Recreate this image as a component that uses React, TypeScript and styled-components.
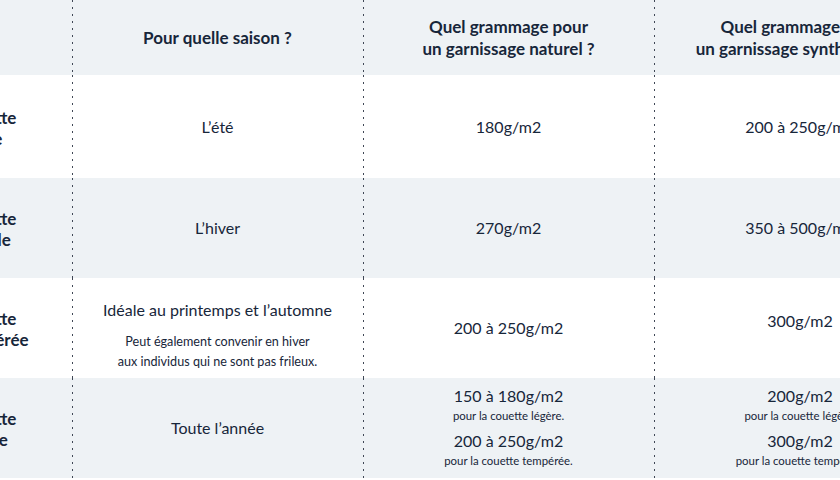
import React from 'react';
import styled, {createGlobalStyle} from 'styled-components';

type Amount = {value: string; note?: string};

type RowData = {
    label: string[];
    season: string;
    seasonNotes?: string[];
    natural: Amount[];
    synthetic: Amount[];
    height: number;
    shaded: boolean;
    liftSynthetic?: boolean;
};

const rows: RowData[] = [
    {
        label: ['Couette', 'légère'],
        season: 'L’été',
        natural: [{value: '180g/m2'}],
        synthetic: [{value: '200 à 250g/m2'}],
        height: 103,
        shaded: false,
    },
    {
        label: ['Couette', 'chaude'],
        season: 'L’hiver',
        natural: [{value: '270g/m2'}],
        synthetic: [{value: '350 à 500g/m2'}],
        height: 100,
        shaded: true,
    },
    {
        label: ['Couette', 'tempérée'],
        season: 'Idéale au printemps et l’automne',
        seasonNotes: ['Peut également convenir en hiver', 'aux individus qui ne sont pas frileux.'],
        natural: [{value: '200 à 250g/m2'}],
        synthetic: [{value: '300g/m2'}],
        height: 100,
        shaded: false,
        liftSynthetic: true,
    },
    {
        label: ['Couette', 'double'],
        season: 'Toute l’année',
        natural: [
            {value: '150 à 180g/m2', note: 'pour la couette légère.'},
            {value: '200 à 250g/m2', note: 'pour la couette tempérée.'},
        ],
        synthetic: [
            {value: '200g/m2', note: 'pour la couette légère.'},
            {value: '300g/m2', note: 'pour la couette tempérée.'},
        ],
        height: 100,
        shaded: true,
    },
];

export default function App() {
    return (
        <>
            <GlobalStyle/>
            <Page>
                <Table>
                    <Row $shaded $height={75}>
                        <LabelCell/>
                        <HeadCell>Pour quelle saison ?</HeadCell>
                        <HeadCell>Quel grammage pour<br/>un garnissage naturel ?</HeadCell>
                        <HeadCell>Quel grammage pour<br/>un garnissage synthétique ?</HeadCell>
                    </Row>

                    {rows.map(row =>
                        <Row key={row.season} $shaded={row.shaded} $height={row.height}>
                            <LabelCell>
                                <Label>{row.label[0]}<br/>{row.label[1]}</Label>
                            </LabelCell>
                            <Cell $padTop={row.seasonNotes ? 14 : 0}>
                                <Season $withNotes={!!row.seasonNotes}>{row.season}</Season>
                                {row.seasonNotes && row.seasonNotes.map(n =>
                                    <SeasonNote key={n}>{n}</SeasonNote>
                                )}
                            </Cell>
                            <Cell>
                                {row.natural.map(a =>
                                    <AmountGroup key={a.value}>
                                        <Value>{a.value}</Value>
                                        {a.note && <AmountNote>{a.note}</AmountNote>}
                                    </AmountGroup>
                                )}
                            </Cell>
                            <Cell $padBottom={row.liftSynthetic ? 14 : 0}>
                                {row.synthetic.map(a =>
                                    <AmountGroup key={a.value}>
                                        <Value>{a.value}</Value>
                                        {a.note && <AmountNote>{a.note}</AmountNote>}
                                    </AmountGroup>
                                )}
                            </Cell>
                        </Row>
                    )}
                </Table>
            </Page>
        </>
    );
}

const GlobalStyle = createGlobalStyle`
    html, body {
        margin: 0;
        padding: 0;
        background: #ffffff;
        overflow: hidden;
    }

    body {
        font-family: Lato, "Open Sans", sans-serif;
        color: #17263a;
    }
`

const Page = styled.div`
    width: 840px;
    height: 480px;
    overflow: hidden;
`

const Table = styled.div`
    width: 994px;
    margin-left: -48px;
    display: flex;
    flex-direction: column;
`

const Row = styled.div<{ $shaded?: boolean; $height: number }>`
    display: grid;
    grid-template-columns: 120px 291px 291px 292px;
    height: ${({$height}) => $height}px;
    background: ${({$shaded}) => $shaded ? '#eef2f5' : '#ffffff'};
`

const dots = `
    background-image: linear-gradient(to bottom, #3f4755 0 2px, transparent 2px 7px);
    background-size: 2px 7px;
    background-repeat: repeat-y;
    background-position: -1px 0;
`

const LabelCell = styled.div`
    display: flex;
    align-items: center;
    padding-left: 4px;
`

const Label = styled.div`
    font-weight: 700;
    font-size: 17px;
    line-height: 21px;
    padding-top: 2px;
`

const HeadCell = styled.div`
    ${dots};
    display: flex;
    align-items: center;
    justify-content: center;
    text-align: center;
    font-weight: 700;
    font-size: 17px;
    line-height: 22px;
`

const Cell = styled.div<{ $padTop?: number; $padBottom?: number }>`
    ${dots};
    display: flex;
    flex-direction: column;
    align-items: center;
    justify-content: center;
    gap: 5px;
    text-align: center;
    padding-top: ${({$padTop}) => $padTop || 0}px;
    padding-bottom: ${({$padBottom}) => $padBottom || 0}px;
`

const Season = styled.div<{ $withNotes: boolean }>`
    font-size: 16px;
    line-height: 24px;
    margin-bottom: ${({$withNotes}) => $withNotes ? '10px' : '0'};
`

const SeasonNote = styled.div`
    font-size: 12.6px;
    line-height: 20px;
    margin-top: -5px;
`

const AmountGroup = styled.div`
    display: flex;
    flex-direction: column;
    align-items: center;
`

const Value = styled.div`
    font-size: 16px;
    line-height: 20px;
`

const AmountNote = styled.div`
    font-size: 11.4px;
    line-height: 20px;
`
